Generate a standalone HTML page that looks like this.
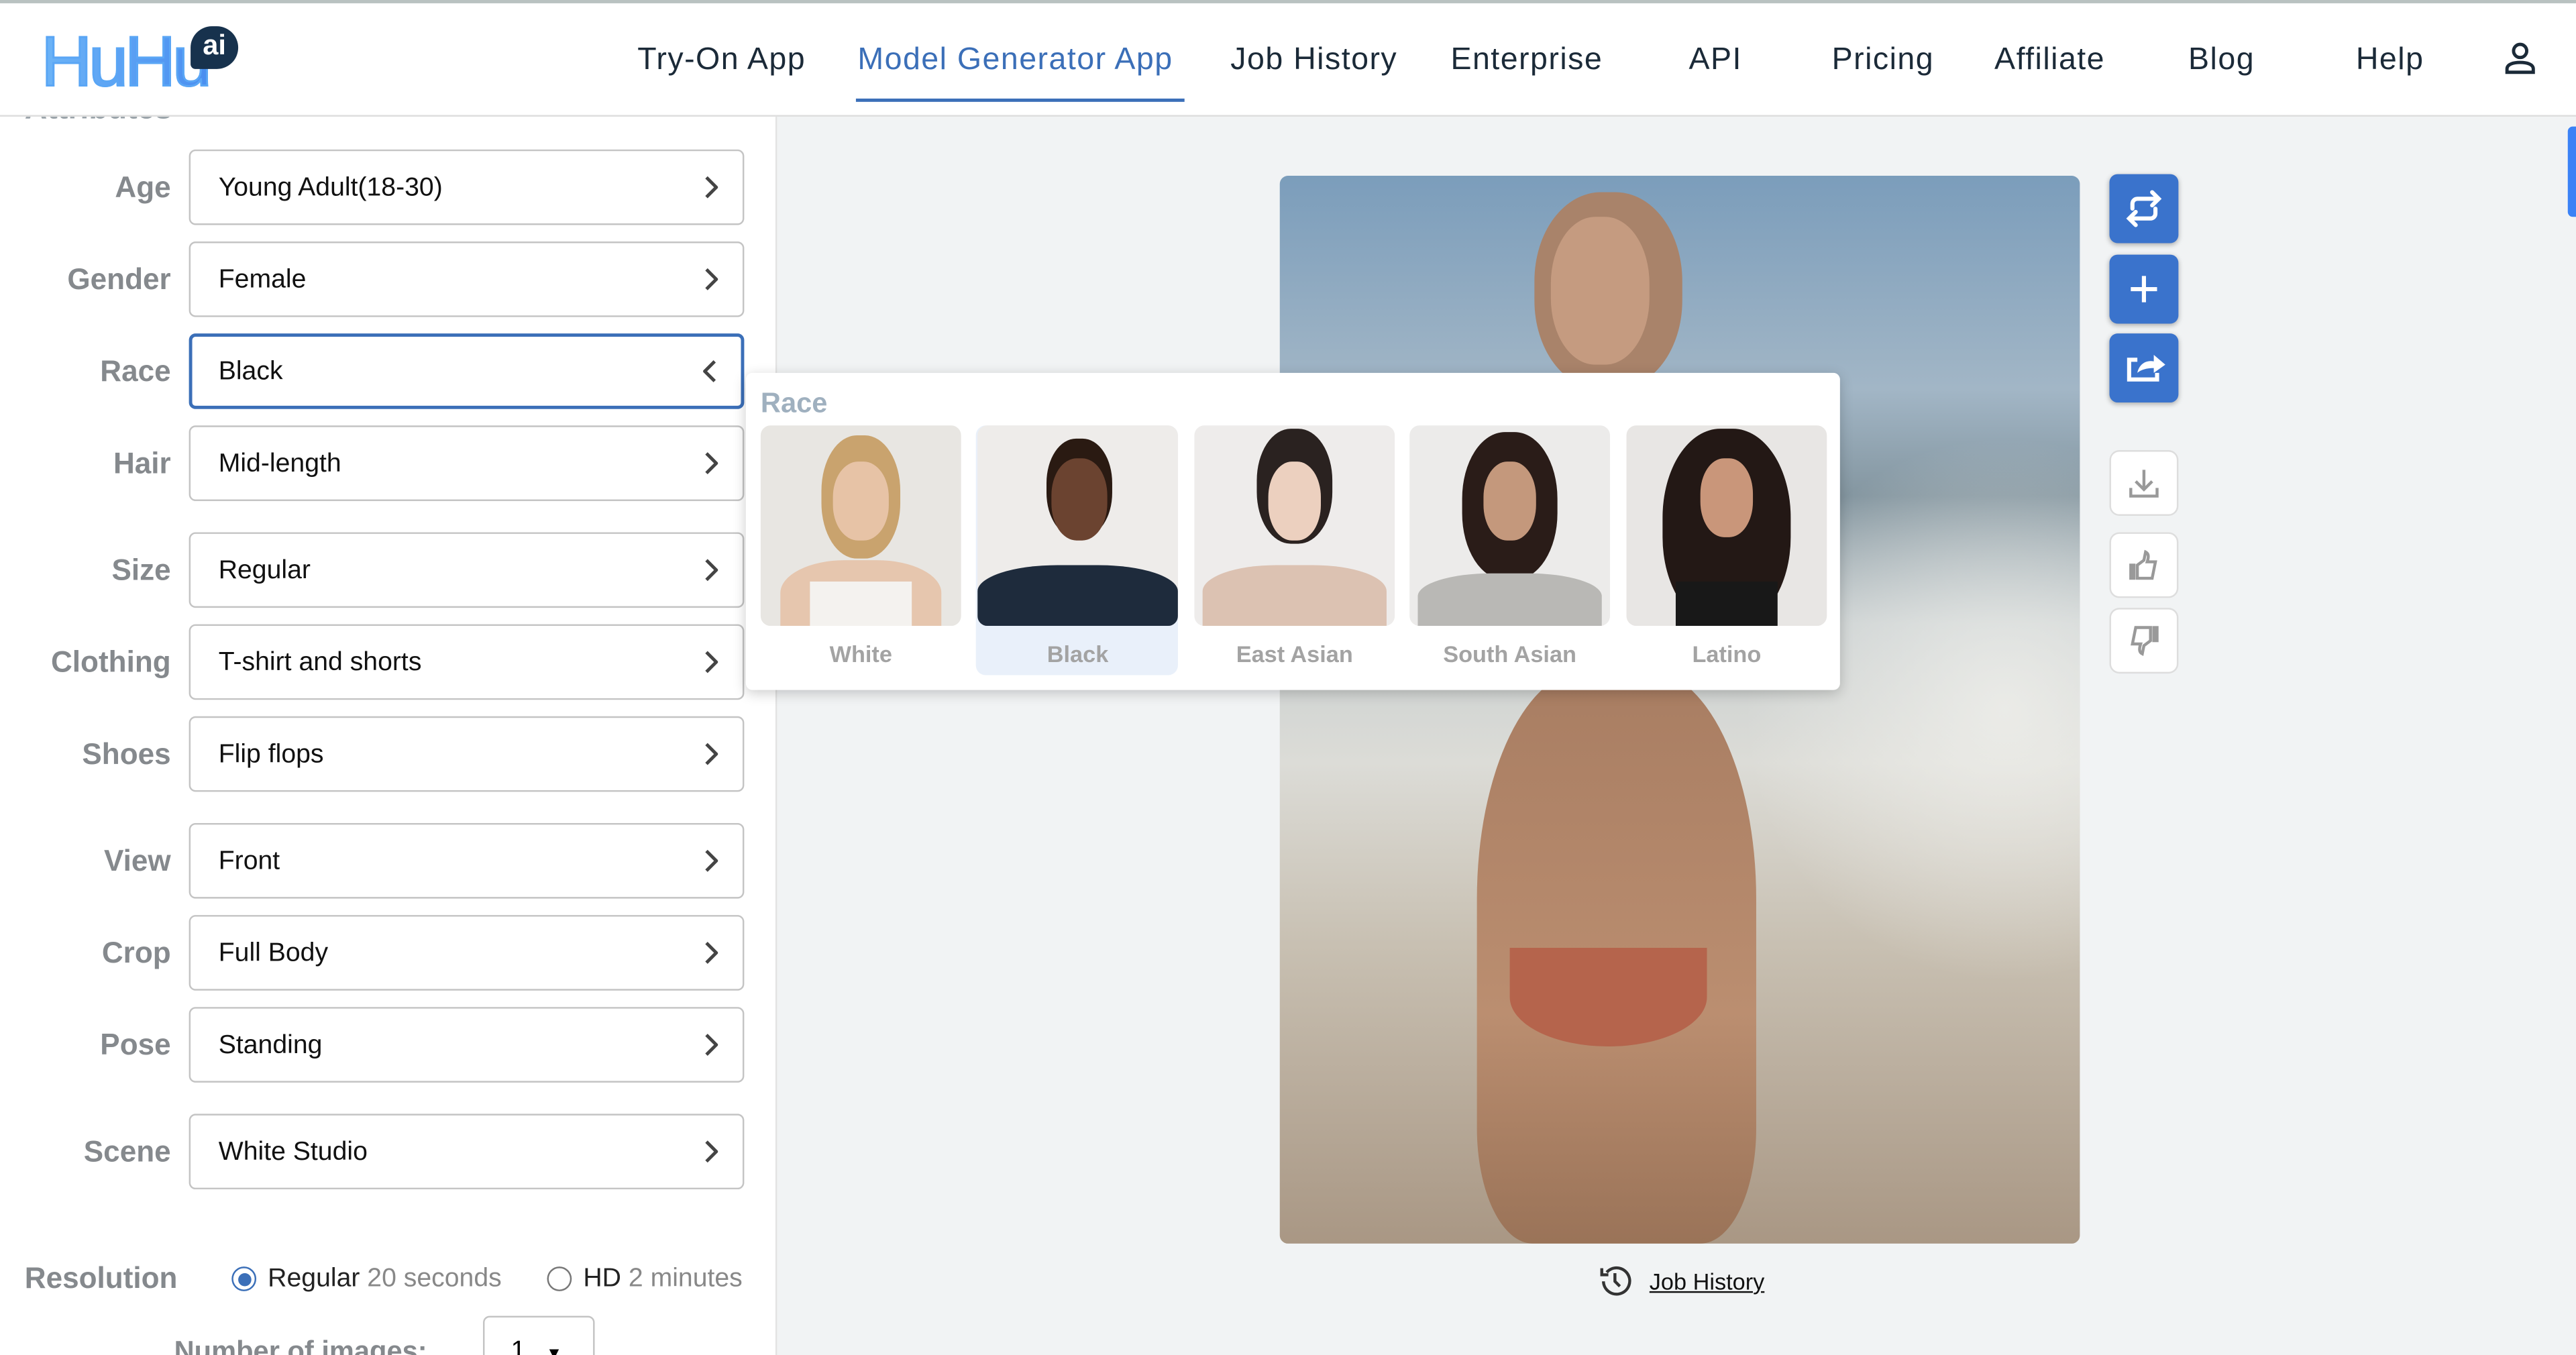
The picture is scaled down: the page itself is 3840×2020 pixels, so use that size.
<!DOCTYPE html>
<html><head><meta charset="utf-8"><style>
html,body{margin:0;padding:0;width:3840px;height:2020px;overflow:hidden;background:#f1f3f4}
#s{position:absolute;left:0;top:0;width:1568px;height:825px;transform:scale(2.44898);transform-origin:0 0;font-family:"Liberation Sans",sans-serif;background:#f1f3f4;overflow:hidden}
.hdr{position:absolute;left:0;top:0;width:1568px;height:71px;background:#fff;border-top:2px solid #b9c2c1;border-bottom:1px solid #ddd;box-sizing:border-box;z-index:2}
.nav{position:absolute;top:24px;font-size:19px;color:#1b2a38;letter-spacing:.6px}
.left{position:absolute;left:0;top:70px;width:472px;height:755px;background:#fff;border-right:1px solid #e3e3e3}
.lab{position:absolute;right:1464px;font-size:18px;font-weight:bold;color:#85898d;text-align:right}
.sel{position:absolute;left:115px;width:338px;height:46px;border:1px solid #c4c4c4;border-radius:4px;box-sizing:border-box;font-size:16px;color:#111;padding:14px 17px 0}
.sel svg{position:absolute;right:15px;top:15px}
.photo{position:absolute;left:779px;top:107px;width:487px;height:650px;border-radius:5px;overflow:hidden;background:linear-gradient(180deg,#7b9dbb 0%,#a2b6c6 20%,#8496a0 30%,#c9cfd0 42%,#dcdcd7 55%,#c8c0b2 72%,#a99784 100%)}
.btn{position:absolute;left:1284px;width:42px;height:42px;border-radius:5px;background:#3a73cc;box-shadow:0 1px 3px rgba(0,0,0,.3)}
.wbtn{position:absolute;left:1284px;width:42px;height:40px;border-radius:6px;background:#fff;border:1px solid #ddd;box-sizing:border-box}
.pop{position:absolute;left:454px;top:227px;width:666px;height:193px;background:#fff;border-radius:4px;box-shadow:0 2px 8px rgba(0,0,0,.2)}
.th{position:absolute;top:32px;width:122px;height:122px;border-radius:6px;overflow:hidden}
.tl{position:absolute;top:163px;width:122px;text-align:center;font-size:14px;font-weight:bold;color:#a3a3a3}
</style></head><body><div id="s">
<div class="left">
 <div style="position:absolute;left:15px;top:-14px;font-size:19px;font-weight:bold;color:#9aa3a9">Attributes</div>
</div>
<div class="hdr">
 <div style="position:absolute;left:25px;top:14px;font-size:43px;letter-spacing:-2px;color:#5aa6f5;line-height:44px;-webkit-text-stroke:1.2px #5aa6f5;background:linear-gradient(90deg,#6cb4f7,#4a8ef0);-webkit-background-clip:text;-webkit-text-fill-color:transparent">HuHu</div>
 <div style="position:absolute;left:116px;top:14px;width:29px;height:26px;border-radius:13px 13px 13px 3px;background:#17324d;color:#fff;font-size:17px;font-weight:bold;text-align:center;line-height:24px">ai</div>
 <div class="nav" style="left:388px">Try-On App</div>
 <div class="nav" style="left:522px;color:#3b6fb8">Model Generator App</div>
 <div style="position:absolute;left:521px;top:58px;width:200px;height:2px;background:#3b6fb8"></div>
 <div class="nav" style="left:749px">Job History</div>
 <div class="nav" style="left:883px">Enterprise</div>
 <div class="nav" style="left:1028px">API</div>
 <div class="nav" style="left:1115px">Pricing</div>
 <div class="nav" style="left:1214px">Affiliate</div>
 <div class="nav" style="left:1332px">Blog</div>
 <div class="nav" style="left:1434px">Help</div>
 <svg style="position:absolute;left:1523px;top:22px" width="22" height="22" viewBox="0 0 22 22" fill="none" stroke="#1b2a38" stroke-width="2"><circle cx="11" cy="7" r="4"/><path d="M3 20v-2c0-3 4-4 8-4s8 1 8 4v2z"/></svg>
</div>
<div style="position:absolute;left:1563px;top:77px;width:5px;height:55px;background:#3b82f6;border-radius:3px 0 0 3px"></div>

<div class="lab" style="top:104px">Age</div><div class="sel" style="top:91px">Young Adult(18-30)<svg width="9" height="14"><path d="M2 1l6 6-6 6" fill="none" stroke="#444" stroke-width="2"/></svg></div>
<div class="lab" style="top:160px">Gender</div><div class="sel" style="top:147px">Female<svg width="9" height="14"><path d="M2 1l6 6-6 6" fill="none" stroke="#444" stroke-width="2"/></svg></div>
<div class="lab" style="top:216px">Race</div><div class="sel" style="top:203px;border:2px solid #3b6fb8;padding:13px 16px 0">Black<svg width="9" height="14" style="right:14px;top:14px"><path d="M7 1L1 7l6 6" fill="none" stroke="#444" stroke-width="2"/></svg></div>
<div class="lab" style="top:272px">Hair</div><div class="sel" style="top:259px">Mid-length<svg width="9" height="14"><path d="M2 1l6 6-6 6" fill="none" stroke="#444" stroke-width="2"/></svg></div>
<div class="lab" style="top:337px">Size</div><div class="sel" style="top:324px">Regular<svg width="9" height="14"><path d="M2 1l6 6-6 6" fill="none" stroke="#444" stroke-width="2"/></svg></div>
<div class="lab" style="top:393px">Clothing</div><div class="sel" style="top:380px">T-shirt and shorts<svg width="9" height="14"><path d="M2 1l6 6-6 6" fill="none" stroke="#444" stroke-width="2"/></svg></div>
<div class="lab" style="top:449px">Shoes</div><div class="sel" style="top:436px">Flip flops<svg width="9" height="14"><path d="M2 1l6 6-6 6" fill="none" stroke="#444" stroke-width="2"/></svg></div>
<div class="lab" style="top:514px">View</div><div class="sel" style="top:501px">Front<svg width="9" height="14"><path d="M2 1l6 6-6 6" fill="none" stroke="#444" stroke-width="2"/></svg></div>
<div class="lab" style="top:570px">Crop</div><div class="sel" style="top:557px">Full Body<svg width="9" height="14"><path d="M2 1l6 6-6 6" fill="none" stroke="#444" stroke-width="2"/></svg></div>
<div class="lab" style="top:626px">Pose</div><div class="sel" style="top:613px">Standing<svg width="9" height="14"><path d="M2 1l6 6-6 6" fill="none" stroke="#444" stroke-width="2"/></svg></div>
<div class="lab" style="top:691px">Scene</div><div class="sel" style="top:678px">White Studio<svg width="9" height="14"><path d="M2 1l6 6-6 6" fill="none" stroke="#444" stroke-width="2"/></svg></div>

<div style="position:absolute;left:15px;top:768px;font-size:18px;font-weight:bold;color:#85898d">Resolution</div>
<div style="position:absolute;left:141px;top:771px;width:15px;height:15px;border:1px solid #3b6fb8;border-radius:50%;box-sizing:border-box"><div style="margin:2.5px;width:8px;height:8px;border-radius:50%;background:#3b6fb8"></div></div>
<div style="position:absolute;left:163px;top:770px;font-size:16px;color:#222">Regular <span style="color:#888">20 seconds</span></div>
<div style="position:absolute;left:333px;top:771px;width:15px;height:15px;border:1px solid #777;border-radius:50%;box-sizing:border-box"></div>
<div style="position:absolute;left:355px;top:770px;font-size:16px;color:#222">HD <span style="color:#888">2 minutes</span></div>
<div style="position:absolute;left:106px;top:813px;font-size:17px;font-weight:bold;color:#85898d">Number of images:</div>
<div style="position:absolute;left:294px;top:801px;width:68px;height:40px;border:1px solid #c4c4c4;border-radius:4px;font-size:16px;padding:12px 16px;box-sizing:border-box">1 <span style="font-size:10px;margin-left:8px">▼</span></div>

<div class="photo">
 <div style="position:absolute;left:260px;top:160px;width:227px;height:330px;background:radial-gradient(ellipse 70% 50% at 80% 50%,rgba(240,240,236,.8),transparent)"></div>
 <div style="position:absolute;left:155px;top:10px;width:90px;height:120px;border-radius:45%;background:#a9836a"></div>
 <div style="position:absolute;left:165px;top:25px;width:60px;height:90px;border-radius:45%;background:#c59b80"></div>
 <div style="position:absolute;left:120px;top:300px;width:170px;height:350px;border-radius:40% 40% 20% 20%;background:linear-gradient(180deg,#a87d62,#bb8e70 60%,#9a7358)"></div>
 <div style="position:absolute;left:140px;top:470px;width:120px;height:60px;border-radius:0 0 50% 50%;background:#b45a44;opacity:.8"></div>
</div>
<div class="btn" style="top:106px"><svg width="42" height="42" viewBox="0 0 42 42" fill="none" stroke="#fff" stroke-width="2.5" stroke-linecap="round"><path d="M14 21v-3a3 3 0 0 1 3-3h13M26 11l4 4-4 4M28 21v3a3 3 0 0 1-3 3H12M16 23l-4 4 4 4"/></svg></div>
<div class="btn" style="top:155px"><svg width="42" height="42" viewBox="0 0 42 42" stroke="#fff" stroke-width="2.5"><path d="M21 13v16M13 21h16"/></svg></div>
<div class="btn" style="top:203px"><svg width="42" height="42" viewBox="0 0 42 42"><path d="M17 16h-5v12h17v-4" fill="none" stroke="#fff" stroke-width="2.5"/><path d="M17 24c1-5 5-8 10-7v-4l7 6-7 5v-3c-4 0-8 1-10 3z" fill="#fff"/></svg></div>
<div class="wbtn" style="top:274px"><svg width="40" height="40" viewBox="0 0 40 40" fill="none" stroke="#999" stroke-width="1.8"><path d="M20 11v12M15 18l5 5 5-5M12 22v5h16v-5"/></svg></div>
<div class="wbtn" style="top:324px"><svg width="40" height="40" viewBox="0 0 40 40" fill="none" stroke="#999" stroke-width="1.8"><rect x="12" y="19" width="2" height="8" fill="#999"/><path d="M16 19l4-3 1-5c2 1 2 3 1 6h5l-2 10h-9z"/></svg></div>
<div class="wbtn" style="top:370px"><svg width="40" height="40" viewBox="0 0 40 40" fill="none" stroke="#999" stroke-width="1.8"><rect x="26" y="11" width="2" height="8" fill="#999"/><path d="M24 19l-4 3-1 5c-2-1-2-3-1-6h-5l2-10h9z"/></svg></div>
<svg style="position:absolute;left:972px;top:769px" width="22" height="22" viewBox="0 0 22 22" fill="none" stroke="#333" stroke-width="1.8"><path d="M4 11a8 8 0 1 0 2-5.5M3 3v4h4M11 6v5l3 3"/></svg>
<div style="position:absolute;left:1004px;top:772px;font-size:14px;color:#111;text-decoration:underline">Job History</div>

<div class="pop">
 <div style="position:absolute;left:9px;top:9px;font-size:17px;font-weight:bold;color:#9fb0bf">Race</div>
 <div style="position:absolute;left:140px;top:32px;width:123px;height:152px;background:#e9f0fa;border-radius:6px"></div>
 <div class="th" style="left:9px;background:#e8e6e2"><div style="position:absolute;left:37px;top:6px;width:48px;height:75px;border-radius:45%;background:#c9a36e"></div><div style="position:absolute;left:44px;top:22px;width:34px;height:48px;border-radius:45%;background:#e7c3a6"></div><div style="position:absolute;left:12px;top:82px;width:98px;height:50px;border-radius:40% 40% 0 0;background:#e6c6ae"></div><div style="position:absolute;left:30px;top:95px;width:62px;height:30px;background:#f4f2ef"></div></div>
 <div class="tl" style="left:9px">White</div>
 <div class="th" style="left:141px;background:#eeecea"><div style="position:absolute;left:42px;top:8px;width:40px;height:60px;border-radius:45%;background:#2a1a12"></div><div style="position:absolute;left:45px;top:20px;width:34px;height:50px;border-radius:45%;background:#6b4330"></div><div style="position:absolute;left:0;top:85px;width:122px;height:40px;border-radius:40% 40% 0 0;background:#1e2b3c"></div></div>
 <div class="tl" style="left:141px">Black</div>
 <div class="th" style="left:273px;background:#eeeceb"><div style="position:absolute;left:38px;top:2px;width:46px;height:70px;border-radius:45%;background:#2a2220"></div><div style="position:absolute;left:45px;top:22px;width:32px;height:48px;border-radius:45%;background:#ecd0bf"></div><div style="position:absolute;left:5px;top:85px;width:112px;height:40px;border-radius:40% 40% 0 0;background:#dcc2b2"></div></div>
 <div class="tl" style="left:273px">East Asian</div>
 <div class="th" style="left:404px;background:#ecebea"><div style="position:absolute;left:32px;top:4px;width:58px;height:90px;border-radius:45%;background:#2a1c18"></div><div style="position:absolute;left:45px;top:22px;width:32px;height:48px;border-radius:45%;background:#c4987c"></div><div style="position:absolute;left:5px;top:90px;width:112px;height:35px;border-radius:40% 40% 0 0;background:#b9b8b5"></div></div>
 <div class="tl" style="left:404px">South Asian</div>
 <div class="th" style="left:536px;background:#e8e6e4"><div style="position:absolute;left:22px;top:2px;width:78px;height:120px;border-radius:45%;background:#231815"></div><div style="position:absolute;left:45px;top:20px;width:32px;height:48px;border-radius:45%;background:#c9967a"></div><div style="position:absolute;left:30px;top:95px;width:62px;height:30px;background:#181818"></div></div>
 <div class="tl" style="left:536px">Latino</div>
</div>
</div></body></html>
